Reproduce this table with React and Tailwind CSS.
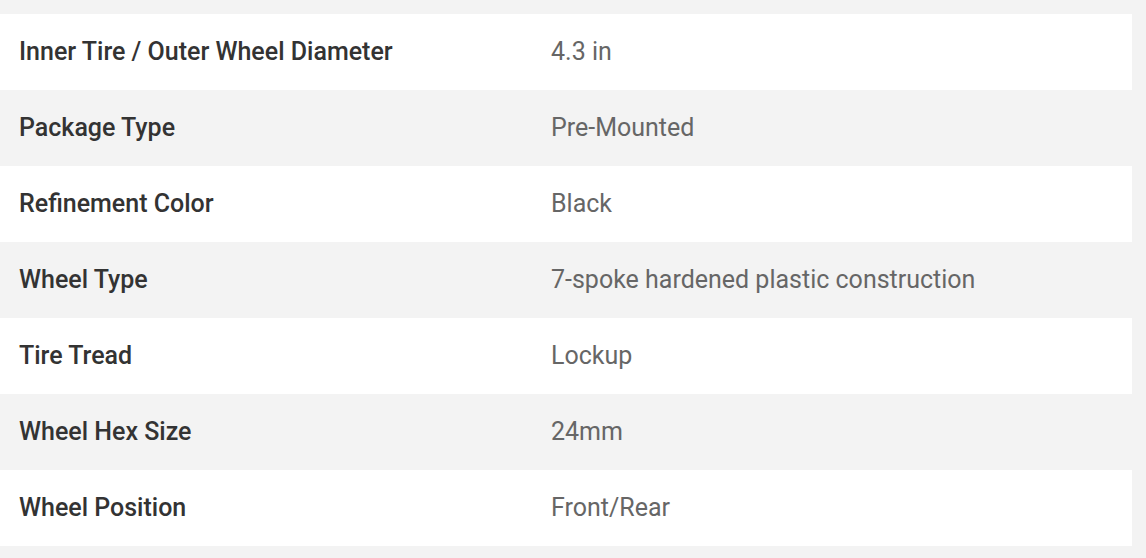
import React from 'react';

const specs = [
  ['Inner Tire / Outer Wheel Diameter', '4.3 in'],
  ['Package Type', 'Pre-Mounted'],
  ['Refinement Color', 'Black'],
  ['Wheel Type', '7-spoke hardened plastic construction'],
  ['Tire Tread', 'Lockup'],
  ['Wheel Hex Size', '24mm'],
  ['Wheel Position', 'Front/Rear'],
];

export default function App() {
  return (
    <div className="bg-[#f3f3f3] min-h-screen pt-[14px] pb-[12px] pr-[14px] font-['Roboto',sans-serif]">
      <div className="flex flex-col">
        {specs.map(([label, value], i) => (
          <div
            key={label}
            className={`flex items-center h-[76px] ${i % 2 === 0 ? 'bg-white' : 'bg-[#f3f3f3]'}`}
          >
            <div className="w-[551px] pl-[19px] text-[25px] font-medium text-[#333333]">{label}</div>
            <div className="text-[25px] text-[#666666]">{value}</div>
          </div>
        ))}
      </div>
    </div>
  );
}
